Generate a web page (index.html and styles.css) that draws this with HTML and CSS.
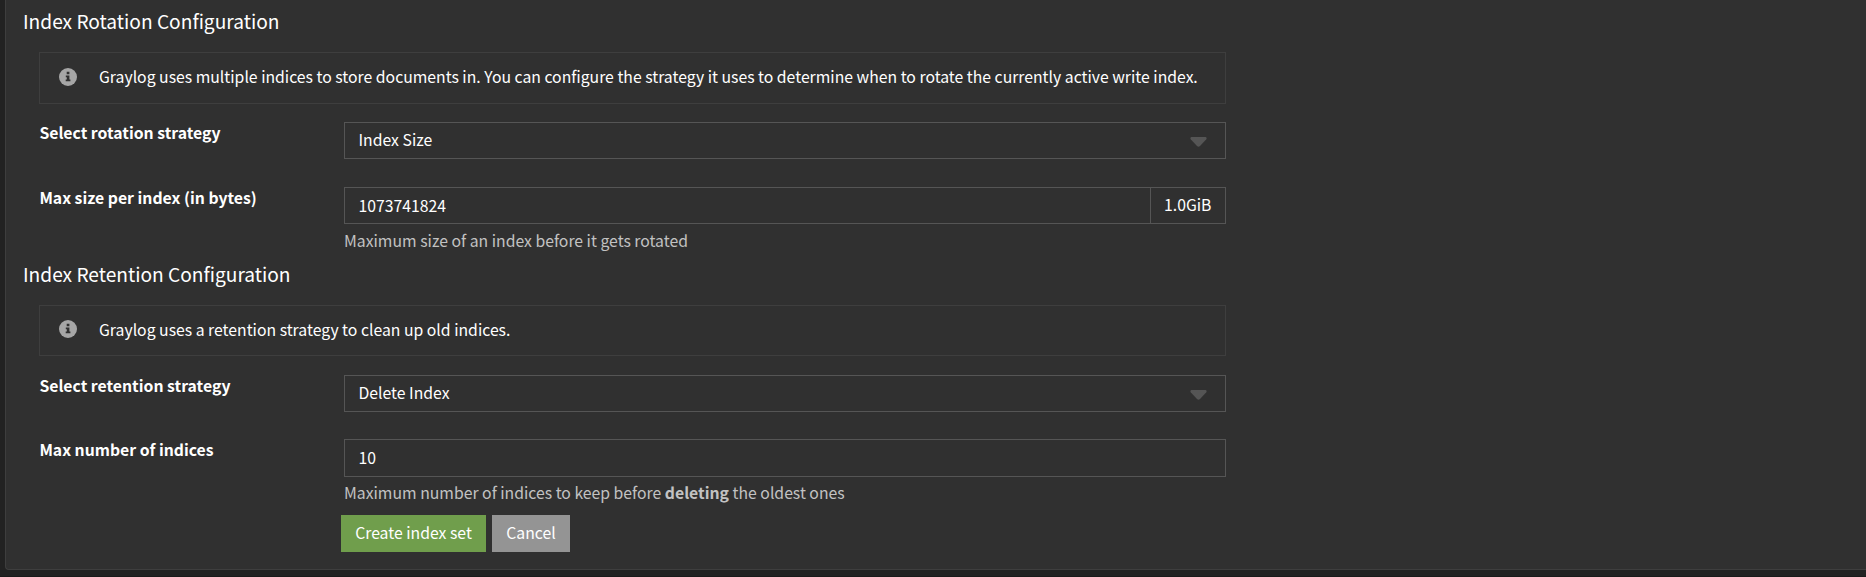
FILE: index.html
```html
<!DOCTYPE html>
<html lang="en">
<head>
<meta charset="utf-8">
<title>Create Index Set</title>
<link rel="stylesheet" href="styles.css">
</head>
<body>
<main class="panel">
  <section class="config">
    <h3 class="title">Index Rotation Configuration</h3>
    <div class="alert">
      <svg class="info" viewBox="0 0 18 18"><circle cx="9" cy="9" r="9" fill="#a6a6a6"/><path fill="#303030" d="M7.7 3.8h2.7v2.4H7.7zM6.8 7.6h3.6v4h1v1.7H6.7v-1.7h1.1V9.3h-1z"/></svg>
      <span class="alert-text">Graylog uses multiple indices to store documents in. You can configure the strategy it uses to determine when to rotate the currently active write index.</span>
    </div>
    <div class="row">
      <label class="label">Select rotation strategy</label>
      <div class="select"><span>Index Size</span><svg class="caret" viewBox="0 0 17 10"><path fill="#555" d="M1.3 0h14.4q1.5.6.6 2.2L10 9q-1.500 1.600-3 0L.7 2.200Q-.2.6 1.300 0z"/></svg></div>
    </div>
    <div class="row size-row">
      <label class="label">Max size per index (in bytes)</label>
      <div>
        <div class="group"><div class="input">1073741824</div><div class="addon">1.0GiB</div></div>
        <p class="help">Maximum size of an index before it gets rotated</p>
      </div>
    </div>
  </section>
  <section class="config retention">
    <h3 class="title">Index Retention Configuration</h3>
    <div class="alert alert-short">
      <svg class="info" viewBox="0 0 18 18"><circle cx="9" cy="9" r="9" fill="#a6a6a6"/><path fill="#303030" d="M7.7 3.8h2.7v2.4H7.7zM6.8 7.6h3.6v4h1v1.7H6.7v-1.7h1.1V9.3h-1z"/></svg>
      <span class="alert-text">Graylog uses a retention strategy to clean up old indices.</span>
    </div>
    <div class="row">
      <label class="label">Select retention strategy</label>
      <div class="select"><span>Delete Index</span><svg class="caret" viewBox="0 0 17 10"><path fill="#555" d="M1.3 0h14.4q1.5.6.6 2.2L10 9q-1.500 1.600-3 0L.7 2.200Q-.2.6 1.300 0z"/></svg></div>
    </div>
    <div class="row count-row">
      <label class="label">Max number of indices</label>
      <div>
        <div class="group group-tall"><div class="input">10</div></div>
        <p class="help">Maximum number of indices to keep before <strong>deleting</strong> the oldest ones</p>
      </div>
    </div>
  </section>
  <div class="actions">
    <button class="btn btn-create">Create index set</button>
    <button class="btn btn-cancel">Cancel</button>
  </div>
</main>
</body>
</html>
```
FILE: styles.css
```css
* { box-sizing: border-box; }
body {
  margin: 0;
  height: 577px;
  overflow: hidden;
  background: #222;
  border-bottom: 1px solid #1a1a1a;
  color: #fff;
  font: 15.77px/20px "Noto Sans CJK SC", "Noto Sans", sans-serif;
}
.panel {
  height: 570px;
  margin-left: 5px;
  padding: 9px 0 0 17px;
  background: #303030;
  border: 1px solid #3e3e3e;
  border-top: 0;
  border-right: 0;
  border-bottom-left-radius: 4px;
}
.config { width: 1203px; }
.retention { margin-top: 11px; }
.title {
  margin: 0 0 19px;
  font-size: 19.15px;
  line-height: 24px;
  font-weight: 400;
}
.alert {
  display: flex;
  align-items: flex-start;
  height: 52px;
  margin-left: 16px;
  padding: 15px 0 0 19px;
  border: 1px solid #3e3e3e;
}
.alert-short { height: 51px; padding-top: 14px; }
.info { width: 18px; height: 18px; margin-right: 22px; }
.alert-text { white-space: nowrap; margin-top: -1px; }
.alert-short .alert-text { margin-top: 0; }
.row {
  display: grid;
  grid-template-columns: 305px 882px;
  margin: 18px 0 0 16px;
}
.retention .row { margin-top: 19px; }
.size-row { margin-top: 28px; }
.retention .count-row { margin-top: 27px; }
.label { padding: 1px 0 0 0.4px; font-weight: 700; white-space: nowrap; }
.select, .group {
  display: flex;
  height: 37px;
  border: 1px solid #555;
}
.select {
  align-items: center;
  justify-content: space-between;
  padding: 0 18px 1px 13.5px;
}
.caret { width: 17px; height: 10px; margin-top: 4px; }
.group { align-items: stretch; }
.group-tall { height: 38px; }
.input { flex: 1; padding: 8px 13.5px; }
.addon { width: 75px; padding: 7px 0 0 13px; border-left: 1px solid #555; }
.help { margin: 7px 0 0; color: #c2c2c2; white-space: nowrap; }
.count-row .help { margin-top: 6px; }
.actions { display: flex; gap: 6px; margin: 12px 0 0 318px; }
.btn {
  height: 37px;
  border: 0;
  padding: 0 0 1px;
  color: #fff;
  font: inherit;
  white-space: nowrap;
}
.btn-create { width: 145px; background: #709e4c; }
.btn-cancel { width: 78px; background: #949494; }
```
